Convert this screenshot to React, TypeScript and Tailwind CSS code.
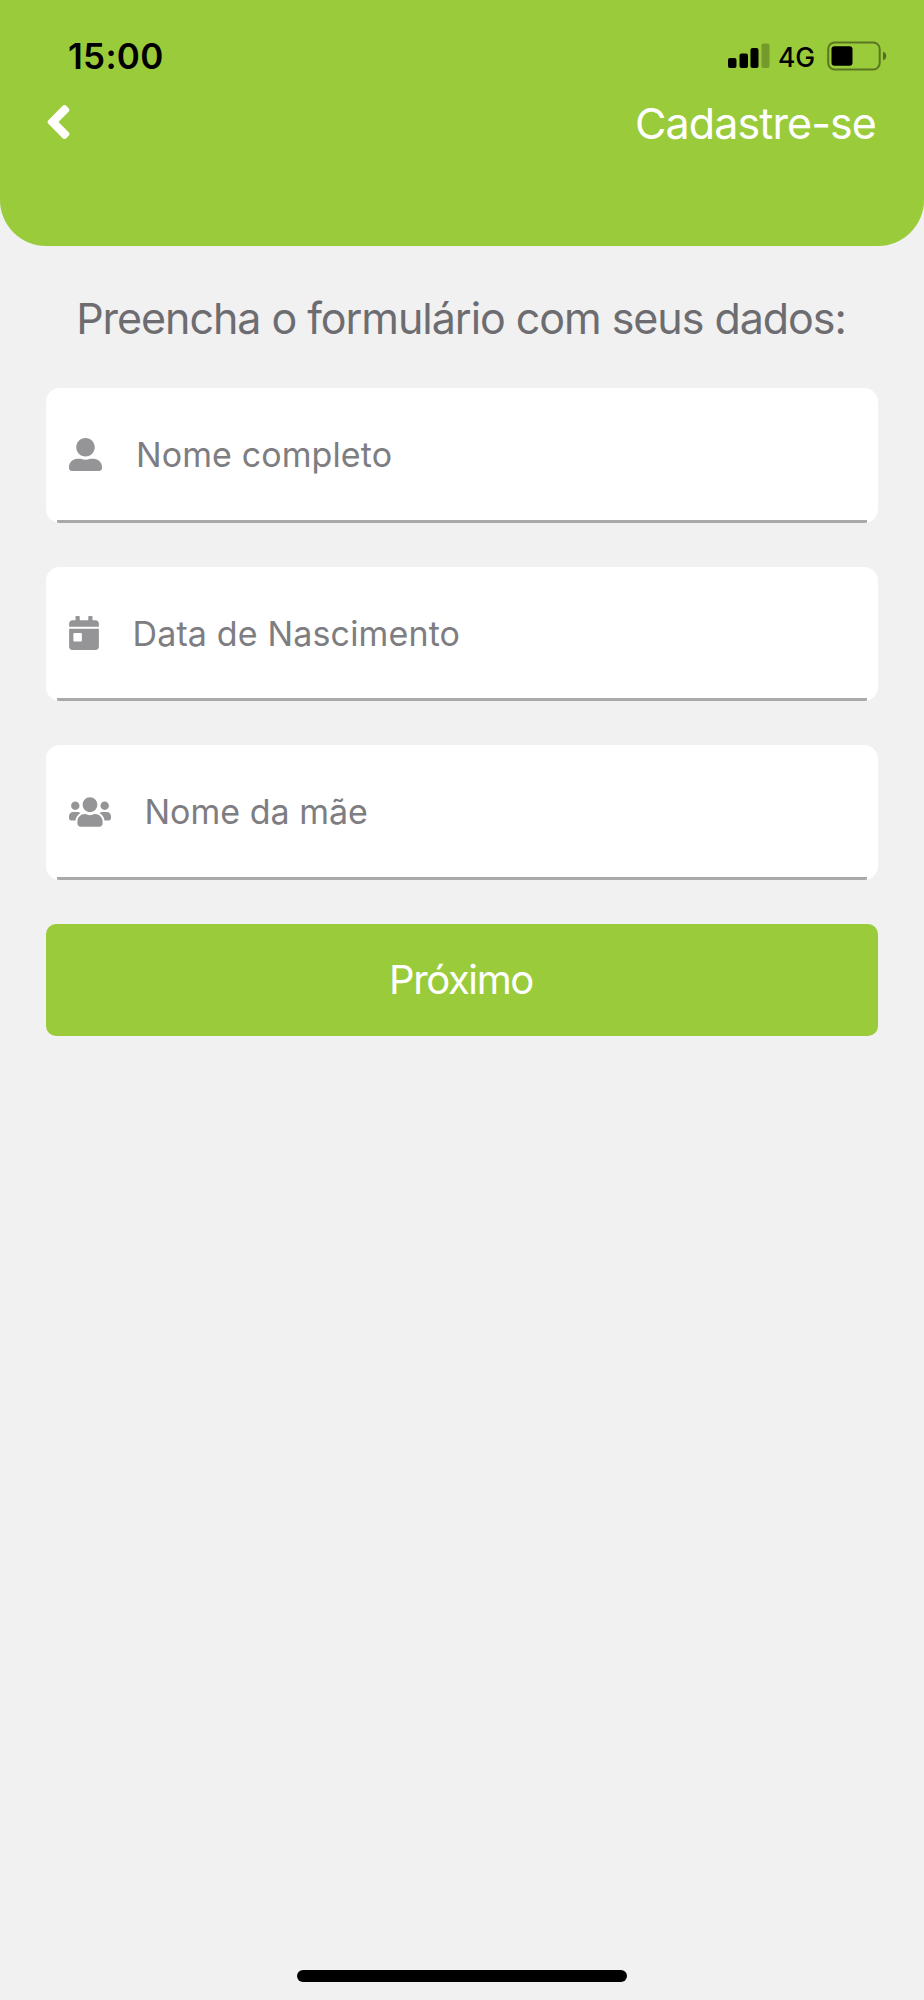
import type { ReactNode } from 'react';
import { FaAngleLeft, FaCalendarDay, FaUserAlt, FaUsers } from 'react-icons/fa';

function StatusIcons() {
  return (
    <div className="flex items-center">
      <svg width="42" height="26" viewBox="0 0 42 26" aria-hidden="true">
        <rect x="0" y="15" width="8.5" height="10" rx="2" />
        <rect x="11.5" y="10.5" width="8.5" height="14.5" rx="2" />
        <rect x="22.5" y="5" width="8" height="20" rx="2" />
        <rect x="33.5" y="0.5" width="8" height="24.5" rx="2" fillOpacity="0.24" />
      </svg>
      <span className="ml-[8px] w-[38px] whitespace-nowrap pt-[1px] text-[26.500px] leading-[28px] font-medium tracking-[-0.2px]">4G</span>
      <svg className="ml-[11px]" width="60" height="30" viewBox="0 0 60 30" aria-hidden="true">
        <rect x="1.2" y="1.5" width="51.5" height="27" rx="6.5" fill="none" stroke="#000" strokeOpacity="0.42" strokeWidth="2" />
        <rect x="4.5" y="5.3" width="21" height="19.4" rx="3" />
        <path d="M56 10.5c2 .8 3.2 2.5 3.2 4.5s-1.200 3.700-3.200 4.500z" fillOpacity="0.45" />
      </svg>
    </div>
  );
}

function Field({ icon, label, spacing }: { icon: ReactNode; label: string; spacing: string }) {
  return (
    <div className="relative flex h-[134.700px] items-center overflow-hidden rounded-[14px] bg-white pb-[2px] pl-[23px] text-[#959597]">
      {icon}
      <input
        aria-label={label}
        placeholder={label}
        className={`h-full min-w-0 flex-1 bg-transparent text-[34px] outline-none placeholder:text-[#7d7d82] ${spacing}`}
      />
      <div className="absolute inset-x-[11px] bottom-0 h-[3px] bg-[#a9a9ab]" />
    </div>
  );
}

export default function App() {
  return (
    <div className="flex h-[2000px] w-[924px] flex-col bg-[#f1f1f1] font-['Inter','Liberation_Sans',sans-serif]">
      <header className="h-[246px] rounded-b-[46px] bg-[#9acb3b]">
        <div className="flex h-[96px] items-center justify-between pt-[16px] pr-[37px] pl-[68px] text-black">
          <span className="text-[35px] leading-[40px] font-semibold tracking-[0.3px]">15:00</span>
          <StatusIcons />
        </div>
        <div className="flex h-[54px] items-center justify-between pr-[48px] pl-[45px] text-white">
          <button aria-label="Voltar">
            <FaAngleLeft className="-mt-[2px] h-[54px] w-[27px]" />
          </button>
          <h1 className="text-[43px] leading-[54px] font-normal tracking-[-0.9px]">Cadastre-se</h1>
        </div>
      </header>
      <main className="flex flex-col px-[46px]">
        <h2 className="mt-[42px] mb-[40px] pr-[2px] text-center text-[43px] leading-[60px] font-normal tracking-[-1.050px] whitespace-nowrap text-[#6d6d71]">
          Preencha o formulário com seus dados:
        </h2>
        <form className="flex flex-col gap-[44px]">
          <Field icon={<FaUserAlt className="h-[33px] w-[33px]" />} label="Nome completo" spacing="ml-[34px] tracking-[0.1px]" />
          <Field icon={<FaCalendarDay className="h-[34px] w-[30px]" />} label="Data de Nascimento" spacing="ml-[33.500px] tracking-[0.150px]" />
          <Field icon={<FaUsers className="h-[34px] w-[42px]" />} label="Nome da mãe" spacing="ml-[33.500px] tracking-[0px]" />
          <button type="button" className="h-[111.500px] rounded-[10px] bg-[#9acb3b] pt-[1px] pr-[2px] text-[40px] font-normal tracking-[-1.400px] text-white">
            Próximo
          </button>
        </form>
      </main>
      <div className="mt-auto mb-[18px] h-[12px] w-[330px] self-center rounded-full bg-black" />
    </div>
  );
}
